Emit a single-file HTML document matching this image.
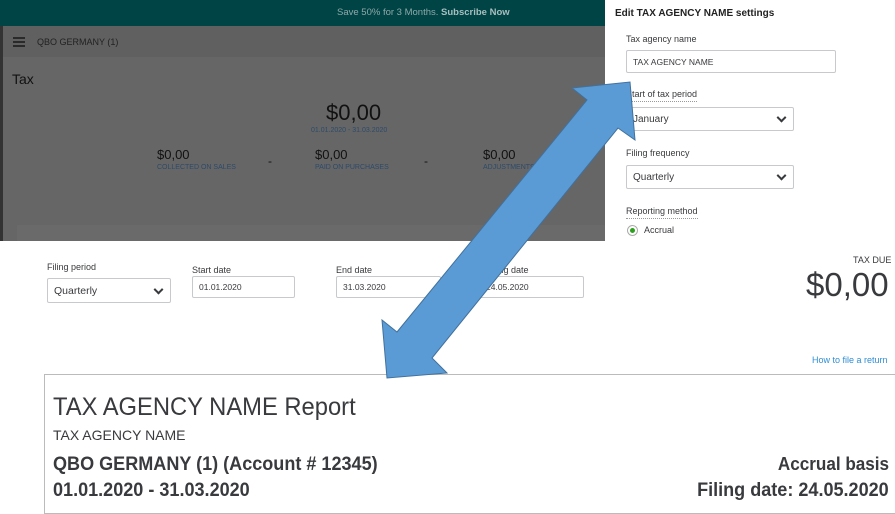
<!DOCTYPE html>
<html><head><meta charset="utf-8"><style>
*{margin:0;padding:0;box-sizing:border-box}
body{width:895px;height:508px;overflow:hidden;background:#fff;font-family:"Liberation Sans",sans-serif;position:relative;color:#393a3d}
.a{position:absolute;white-space:nowrap}
.in{position:absolute;border:1px solid #c8c9cc;border-radius:2px;background:#fff;font-size:10px;color:#393a3d;padding-left:6px;display:flex;align-items:center}
.chev{position:absolute;right:8px;top:50%;width:7px;height:7px;border-right:2px solid #393a3d;border-bottom:2px solid #393a3d;transform:translateY(-70%) rotate(45deg)}
.n{transform:scaleX(0.95);transform-origin:left top}
.r{transform:scaleX(0.95);transform-origin:right top}
</style></head><body>
<div class="a" style="left:0;top:0;width:605px;height:241px;background:#666"></div>
<div class="a" style="left:0;top:0;width:605px;height:26px;background:#004446"></div>
<div class="a" style="left:337px;top:7px;font-size:9.5px;color:#8fa9a9">Save 50% for 3 Months. <b style="color:#a8bfbf">Subscribe Now</b></div>
<div class="a" style="left:0;top:26px;width:3px;height:215px;background:#333"></div>
<div class="a" style="left:3px;top:26px;width:602px;height:31px;background:#606060"></div>
<div class="a" style="left:13px;top:37px;width:12px;height:2px;background:#2a2a2a;box-shadow:0 4px 0 #2a2a2a,0 8px 0 #2a2a2a"></div>
<div class="a" style="left:37px;top:37px;font-size:9px;color:#222">QBO GERMANY (1)</div>
<div class="a" style="left:12px;top:71px;font-size:14px;color:#111">Tax</div>
<div class="a" style="left:326px;top:100px;font-size:22px;color:#111">$0,00</div>
<div class="a" style="left:311px;top:127px;font-size:7px;color:#2d4a6a">01.01.2020 - 31.03.2020</div>
<div class="a" style="left:157px;top:147px;font-size:13px;color:#111">$0,00</div>
<div class="a" style="left:157px;top:164px;font-size:7px;color:#2d4a6a">COLLECTED ON SALES</div>
<div class="a" style="left:268px;top:154px;font-size:12px;color:#111">-</div>
<div class="a" style="left:315px;top:147px;font-size:13px;color:#111">$0,00</div>
<div class="a" style="left:315px;top:164px;font-size:7px;color:#2d4a6a">PAID ON PURCHASES</div>
<div class="a" style="left:424px;top:154px;font-size:12px;color:#111">-</div>
<div class="a" style="left:483px;top:147px;font-size:13px;color:#111">$0,00</div>
<div class="a" style="left:483px;top:164px;font-size:7px;color:#2d4a6a">ADJUSTMENTS</div>
<div class="a" style="left:17px;top:225px;width:588px;height:16px;background:#6a6a6a"></div>
<div class="a" style="left:605px;top:0;width:290px;height:241px;background:#fff"></div>
<div class="a" style="left:615px;top:8px;font-size:10px;font-weight:bold;color:#222">Edit TAX AGENCY NAME settings</div>
<div class="a" style="left:626px;top:34px;font-size:9px">Tax agency name</div>
<div class="in" style="left:626px;top:50px;width:210px;height:23px;font-size:8.5px">TAX AGENCY NAME</div>
<div class="a" style="left:626px;top:89px;font-size:9px;border-bottom:1px dotted #999;padding-bottom:2px">Start of tax period</div>
<div class="in" style="left:626px;top:107px;width:168px;height:24px;padding-left:6px">January<span class="chev"></span></div>
<div class="a" style="left:626px;top:148px;font-size:9px">Filing frequency</div>
<div class="in" style="left:626px;top:165px;width:168px;height:24px">Quarterly<span class="chev"></span></div>
<div class="a" style="left:626px;top:206px;font-size:9px;border-bottom:1px dotted #999;padding-bottom:2px">Reporting method</div>
<div class="a" style="left:627px;top:225px;width:11px;height:11px;border:1px solid #aaa;border-radius:50%;background:#fff"></div>
<div class="a" style="left:630px;top:228px;width:5px;height:5px;border-radius:50%;background:#2ca01c"></div>
<div class="a" style="left:644px;top:225px;font-size:9px">Accrual</div>
<div class="a" style="left:47px;top:262px;font-size:9px">Filing period</div>
<div class="in" style="left:47px;top:278px;width:124px;height:25px;font-size:10.5px">Quarterly<span class="chev"></span></div>
<div class="a" style="left:192px;top:265px;font-size:9px">Start date</div>
<div class="in" style="left:192px;top:276px;width:103px;height:22px;font-size:8.5px">01.01.2020</div>
<div class="a" style="left:336px;top:265px;font-size:9px">End date</div>
<div class="in" style="left:336px;top:276px;width:105px;height:22px;font-size:8.5px">31.03.2020</div>
<div class="a" style="left:487px;top:265px;font-size:9px">Filing date</div>
<div class="in" style="left:479px;top:276px;width:105px;height:22px;font-size:8.5px">24.05.2020</div>
<div class="a" style="left:853px;top:255px;font-size:9px">TAX DUE</div>
<div class="a" style="left:806px;top:266px;font-size:33px;color:#393a3d">$0,00</div>
<div class="a" style="left:812px;top:355px;font-size:9px;color:#2f8ed6">How to file a return</div>
<div class="a" style="left:44px;top:374px;width:860px;height:140px;border:1px solid #bbb"></div>
<div class="a n" style="left:53px;top:393px;font-size:25px">TAX AGENCY NAME Report</div>
<div class="a" style="left:53px;top:427px;font-size:14px">TAX AGENCY NAME</div>
<div class="a n" style="left:53px;top:454px;font-size:19px;font-weight:bold">QBO GERMANY (1) (Account # 12345)</div>
<div class="a n" style="left:53px;top:480px;font-size:19px;font-weight:bold">01.01.2020 - 31.03.2020</div>
<div class="a r" style="right:6px;top:454px;font-size:18px;font-weight:bold">Accrual basis</div>
<div class="a r" style="right:6px;top:480px;font-size:19px;font-weight:bold">Filing date: 24.05.2020</div>
<svg class="a" style="left:0;top:0" width="895" height="508"><polygon points="630,82 635,140 618,128 432,358 447,373 387,378 382,320 397,332 587,100 572,88" fill="#5b9bd5" stroke="#41719c" stroke-width="1"/></svg>
</body></html>
